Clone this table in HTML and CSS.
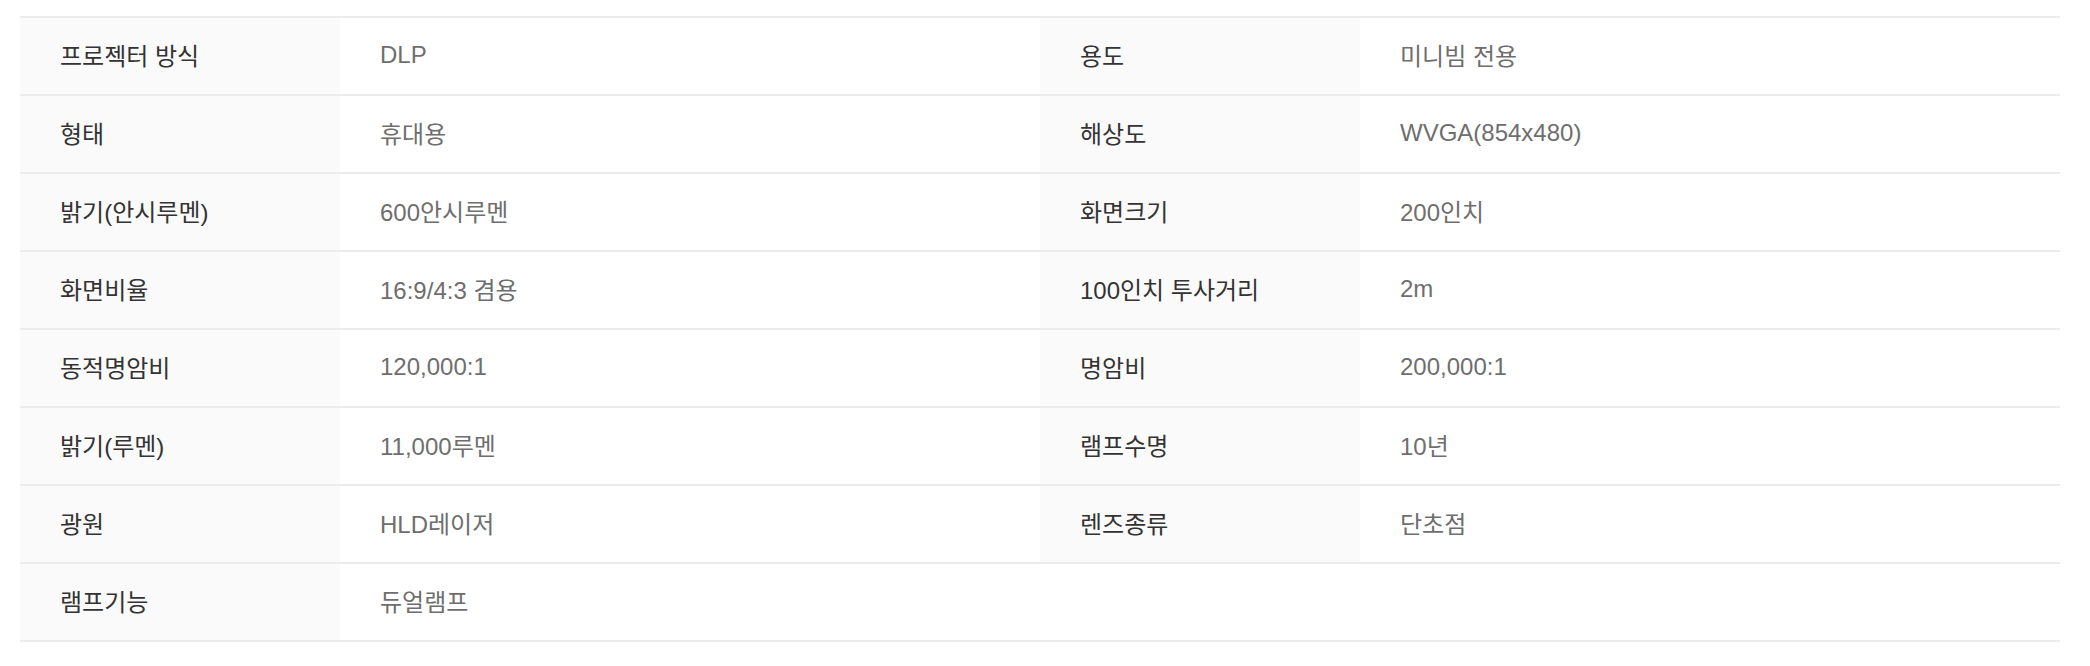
FILE: index.html
```html
<!DOCTYPE html>
<html lang="ko">
<head>
<meta charset="utf-8">
<link rel="stylesheet" href="styles.css">
</head>
<body>
<div class="spec">
  <div class="row"><div class="th">프로젝터 방식</div><div class="td">DLP</div><div class="th">용도</div><div class="td">미니빔 전용</div></div>
  <div class="row"><div class="th">형태</div><div class="td">휴대용</div><div class="th">해상도</div><div class="td">WVGA(854x480)</div></div>
  <div class="row"><div class="th">밝기(안시루멘)</div><div class="td">600안시루멘</div><div class="th">화면크기</div><div class="td">200인치</div></div>
  <div class="row"><div class="th">화면비율</div><div class="td">16:9/4:3 겸용</div><div class="th">100인치 투사거리</div><div class="td">2m</div></div>
  <div class="row"><div class="th">동적명암비</div><div class="td">120,000:1</div><div class="th">명암비</div><div class="td">200,000:1</div></div>
  <div class="row"><div class="th">밝기(루멘)</div><div class="td">11,000루멘</div><div class="th">램프수명</div><div class="td">10년</div></div>
  <div class="row"><div class="th">광원</div><div class="td">HLD레이저</div><div class="th">렌즈종류</div><div class="td">단초점</div></div>
  <div class="row"><div class="th">램프기능</div><div class="td">듀얼램프</div><div class="empty"></div><div class="empty"></div></div>
</div>
</body>
</html>
```

FILE: styles.css
```css
html, body {
  margin: 0;
  padding: 0;
  background: #fff;
}
body {
  padding: 16px 30px 0 20px;
  font-family: "Liberation Sans", "Noto Sans CJK KR", sans-serif;
  font-size: 24px;
}
.spec {
  width: 2040px;
  border-top: 2px solid #ececec;
}
.row {
  display: grid;
  grid-template-columns: 320px 700px 320px 700px;
  height: 76px;
  border-bottom: 2px solid #ececec;
}
.th, .td {
  display: flex;
  align-items: center;
  padding-left: 40px;
  padding-bottom: 3px;
}
.th {
  background: #fafafa;
  color: #333;
}
.td {
  background: #fff;
  color: #6e6e6e;
}
```
